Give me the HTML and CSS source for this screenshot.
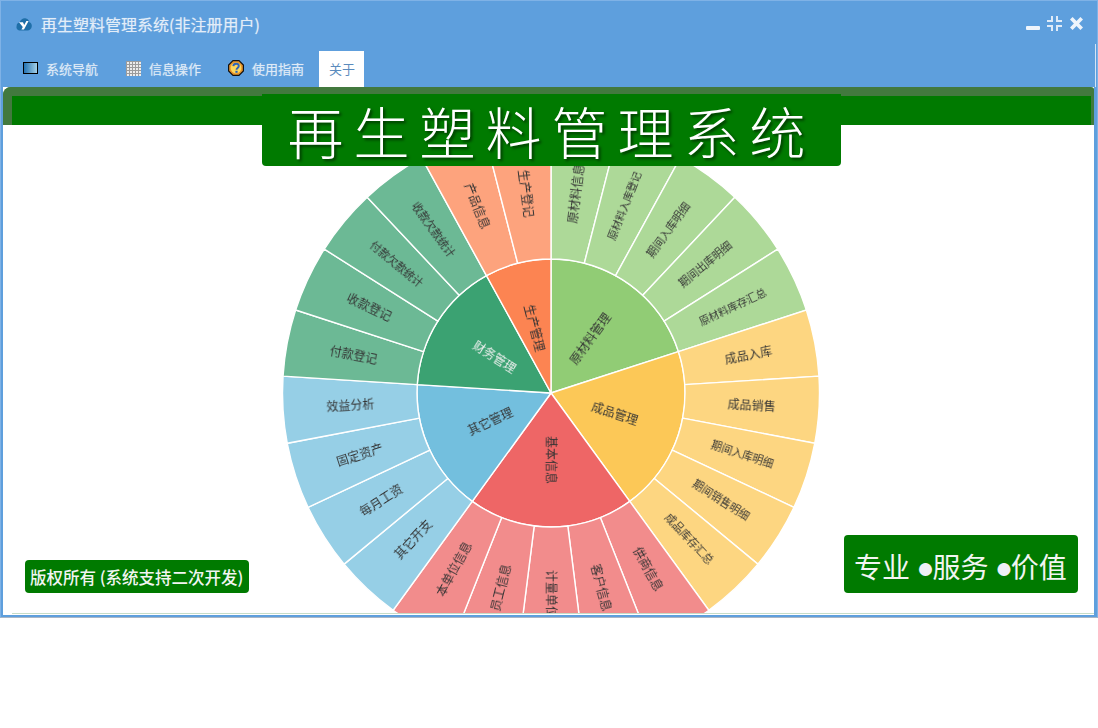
FILE: index.html
```html
<!DOCTYPE html>
<html lang="zh-CN">
<head>
<meta charset="utf-8">
<title>再生塑料管理系统</title>
<link rel="stylesheet" href="styles.css">
</head>
<body>
<div class="window">
  <header class="titlebar">
    <svg class="logo" viewBox="0 0 16 16" aria-hidden="true">
      <path d="M3 14.5C1 14 0 12 .6 10 .6 8 2 6.6 3.6 6.6 4.4 3.4 7.4 1.6 10 2.4c2 .5 3.2 2 3.4 3.8 1.6.6 2.6 2.2 2.4 4-.2 2.4-2 4.3-4.4 4.4z" fill="#1f6fa8"/>
      <path d="M3 6.2h4l1.2 2.8L10.4 5h2.2L8 13.6H5.4l1.4-2.6z" fill="#fff"/>
    </svg>
    <span class="app-name">再生塑料管理系统(非注册用户)</span>
    <div class="controls">
      <svg class="ctl ctl-min" viewBox="0 0 14 14" aria-hidden="true"><rect x="0" y="9" width="14" height="4" rx="1"/></svg>
      <svg class="ctl ctl-zoom" viewBox="0 0 15 15" aria-hidden="true"><path d="M4 0h2v6H0V4h4zM9 0h2v4h4v2H9zM0 9h6v6H4v-4H0zM9 9h6v2h-4v4H9z"/></svg>
      <svg class="ctl ctl-close" viewBox="0 0 13 13" aria-hidden="true"><path d="M2.600 0 6.500 3.900 10.400 0 13 2.600 9.100 6.500 13 10.400 10.400 13 6.500 9.100 2.600 13 0 10.400 3.900 6.500 0 2.600z"/></svg>
    </div>
  </header>
  <nav class="tabs">
    <a class="tab">
      <svg class="ico" viewBox="0 0 15 15" aria-hidden="true">
        <defs><linearGradient id="scr" x1="0" y1="0" x2="1" y2="0"><stop offset="0" stop-color="#1f6fb0"/><stop offset="1" stop-color="#a9d4ea"/></linearGradient></defs>
        <rect x=".5" y="1.500" width="14" height="11" fill="url(#scr)" stroke="#000"/>
      </svg>
      <span>系统导航</span>
    </a>
    <a class="tab">
      <svg class="ico" viewBox="0 0 15 15" aria-hidden="true">
        <rect x="0" y="0" width="15" height="15" fill="#ececec"/>
        <path d="M.5 0v15M3.500 0v15M6.500 0v15M9.500 0v15M12.500 0v15M0 .5h15M0 3.500h15M0 6.500h15M0 9.500h15M0 12.500h15" stroke="#9b9b9b" stroke-width="1" fill="none"/>
      </svg>
      <span>信息操作</span>
    </a>
    <a class="tab tab-help">
      <svg class="ico ico-help" viewBox="0 0 16 16" aria-hidden="true">
        <path d="M5 .6h6L15.400 5v6L11 15.400H5L.6 11V5z" fill="#e8932a" stroke="#111" stroke-width="1.200"/>
        <circle cx="8" cy="8" r="5.400" fill="#fcd75c"/>
        <path d="M5.300 6.200C5.500 4.500 6.800 3.800 8.100 3.800c1.600 0 2.700.9 2.700 2.300 0 1.900-2.300 1.900-2.300 3.600" fill="none" stroke="#2f63b8" stroke-width="1.900"/>
        <rect x="7.400" y="10.800" width="2.200" height="2" fill="#2f63b8"/>
      </svg>
      <span>使用指南</span>
    </a>
    <a class="tab tab-active"><span>关于</span></a>
  </nav>
  <main class="content">
    <div class="banner"></div>
    <svg id="chart" class="chart" viewBox="0 0 1092 526" role="img" aria-label="功能模块旭日图"></svg>
    <h1 class="headline">再生塑料管理系统</h1>
    <div class="badge badge-copy">版权所有 (系统支持二次开发)</div>
    <div class="badge badge-motto">专业 <span class="dot">●</span>服务 <span class="dot">●</span>价值</div>
  </main>
</div>
<script src="chart.js"></script>
</body>
</html>
```
FILE: styles.css
```css
* { box-sizing: border-box; }
html, body { margin: 0; padding: 0; background: #fff; }
body { font-family: "Noto Sans CJK SC", "Liberation Sans", sans-serif; }

.window {
  position: relative;
  display: flex;
  flex-direction: column;
  width: 1098px;
  height: 618px;
  background: #5e9fdd;
  border: 1px solid #7fb2e6;
  border-width: 1px 1px 0 1px;
  border-bottom: 1px solid #a9b6c6;
  padding-bottom: 2px;
}
.window::after {
  content: "";
  position: absolute;
  right: 1px;
  top: 43px;
  width: 1px;
  height: 43px;
  background: #d5e4f5;
}

.titlebar {
  display: flex;
  align-items: center;
  flex: none;
  height: 50px;
  padding: 0 14px 4px 15px;
  gap: 9px;
}
.logo { width: 16px; height: 16px; flex: none; }
.app-name {
  font-size: 16px;
  line-height: 20px;
  color: #e3edf8;
  text-shadow: 0 0 1px rgba(255, 255, 255, .45);
}
.controls { display: flex; align-items: flex-start; margin-left: auto; gap: 7px; }
.ctl { display: block; fill: #eef4fb; }
.ctl-min { width: 14px; height: 14px; }
.ctl-zoom { width: 15px; height: 15px; margin-top: -1px; opacity: .9; }
.ctl-close { width: 13px; height: 13px; margin-left: 1px; }

.tabs {
  display: flex;
  align-items: stretch;
  flex: none;
  height: 36px;
  padding-left: 8px;
}
.tab {
  display: flex;
  align-items: center;
  gap: 8px;
  padding: 0 14px 2px;
  font-size: 13px;
  color: #dfeaf6;
  text-shadow: 0 0 1px rgba(255, 255, 255, .5);
}
.ico { width: 15px; height: 15px; flex: none; }
.tab-help { padding: 0 15px 2px 13px; }
.ico-help { width: 16px; height: 16px; }
.tab-active {
  padding: 0 9px 2px 10px;
  background: #fff;
  color: #5a8bbd;
  text-shadow: none;
}

.content {
  position: relative;
  flex: 1;
  margin: 0 3px 0 2px;
  overflow: hidden;
  background: #fff;
}
.content::after {
  content: "";
  position: absolute;
  left: 9px;
  right: 0;
  bottom: 1px;
  height: 1px;
  background: #c6dcc8;
}
.banner {
  position: relative;
  z-index: 1;
  height: 38px;
  background: #007a00;
  border-top: 9px solid #42793e;
  border-left: 9px solid #42793e;
  border-right: 3px solid #3f7a3c;
  border-top-left-radius: 8px;
  border-top-right-radius: 3px;
}
.chart {
  position: absolute;
  left: 0;
  top: 0;
  width: 1092px;
  height: 526px;
}
.sector { stroke: #fff; stroke-width: 1.4; }
.leaf { fill-opacity: .75; }
.label {
  font-size: 12px;
  fill: #333;
  text-anchor: middle;
  dominant-baseline: central;
  filter: blur(.25px);
}
.label-six { font-size: 10.8px; }
.label-seven { font-size: 10.4px; }
.label-light { fill: #f2f2f2; }

.headline {
  position: absolute;
  z-index: 2;
  left: 259px;
  top: 7px;
  width: 579px;
  height: 72px;
  margin: 0;
  background: #007a00;
  border-radius: 0 0 4px 4px;
  color: #fff;
  font-size: 56px;
  font-weight: 300;
  line-height: 72px;
  letter-spacing: 10px;
  text-align: center;
  text-shadow: 2px 2px 3px rgba(0, 0, 0, .55);
}
.badge {
  position: absolute;
  z-index: 2;
  background: #007a00;
  border-radius: 4px;
  color: #f2f5f2;
  white-space: nowrap;
}
.badge-copy {
  left: 22px;
  top: 473px;
  width: 224px;
  height: 33px;
  padding-left: 5px;
  font-size: 16.5px;
  font-weight: 500;
  line-height: 35px;
}
.badge-motto {
  left: 841px;
  top: 448px;
  width: 234px;
  height: 58px;
  padding-left: 10px;
  font-size: 28px;
  line-height: 62px;
}
.dot {
  font-family: "Liberation Sans", sans-serif;
  font-size: 30px;
  line-height: 1;
  letter-spacing: -2px;
  color: #eef0f6;
}
```
FILE: chart.js
```js
var NS = "http://www.w3.org/2000/svg";
var CX = 548, CY = 306, R1 = 134, R2 = 268.5;
var groups = [
  { name: "原材料管理", color: "#91cc75", leaves: ["原材料信息", "原材料入库登记", "期间入库明细", "期间出库明细", "原材料库存汇总"] },
  { name: "成品管理", color: "#fcc857", leaves: ["成品入库", "成品销售", "期间入库明细", "期间销售明细", "成品库存汇总"] },
  { name: "基本信息", color: "#ee6666", leaves: ["供商信息", "客户信息", "计量单位", "员工信息", "本单位信息"] },
  { name: "其它管理", color: "#73bfde", leaves: ["其它开支", "每月工资", "固定资产", "效益分析"] },
  { name: "财务管理", color: "#3ba272", light: true, leaves: ["付款登记", "收款登记", "付款欠款统计", "收款欠款统计"] },
  { name: "生产管理", color: "#fc8452", leaves: ["产品信息", "生产登记"] }
];
var STEP = 360 / 25;
var SIZE_CLASS = { 6: " label-six", 7: " label-seven" };
var svg = document.getElementById("chart");

function pt(r, deg) {
  var a = deg * Math.PI / 180;
  return [CX + r * Math.sin(a), CY - r * Math.cos(a)];
}
function sector(r0, r1, a0, a1, color, cls) {
  var p = [pt(r1, a0), pt(r1, a1), pt(r0, a1), pt(r0, a0)];
  var large = a1 - a0 > 180 ? 1 : 0;
  var d = "M" + (r0 ? p[3] : [CX, CY]) + "L" + p[0] +
    "A" + r1 + " " + r1 + " 0 " + large + " 1 " + p[1];
  d += r0 ? "L" + p[2] + "A" + r0 + " " + r0 + " 0 " + large + " 0 " + p[3] + "Z" : "Z";
  var el = document.createElementNS(NS, "path");
  el.setAttribute("d", d);
  el.setAttribute("fill", color);
  el.setAttribute("class", cls);
  svg.appendChild(el);
}
function label(text, r, mid, cls) {
  var el = document.createElementNS(NS, "text");
  var p = pt(r, mid);
  var rot = mid <= 180 ? mid - 90 : mid + 90;
  el.setAttribute("transform", "translate(" + p + ") rotate(" + rot + ") translate(0,-1.7)");
  el.setAttribute("class", cls);
  el.textContent = text;
  svg.appendChild(el);
}

var angle = 0, labels = [];
groups.forEach(function (g) {
  var span = STEP * g.leaves.length;
  sector(0, R1, angle, angle + span, g.color, "sector");
  labels.push([g.name, 67, angle + span / 2, "label" + (g.light ? " label-light" : "")]);
  g.leaves.forEach(function (name, i) {
    var a = angle + STEP * i;
    sector(R1, R2, a, a + STEP, g.color, "sector leaf");
    labels.push([name, 201, a + STEP / 2, "label" + (SIZE_CLASS[name.length] || "")]);
  });
  angle += span;
});
labels.forEach(function (l) { label(l[0], l[1], l[2], l[3]); });
```
